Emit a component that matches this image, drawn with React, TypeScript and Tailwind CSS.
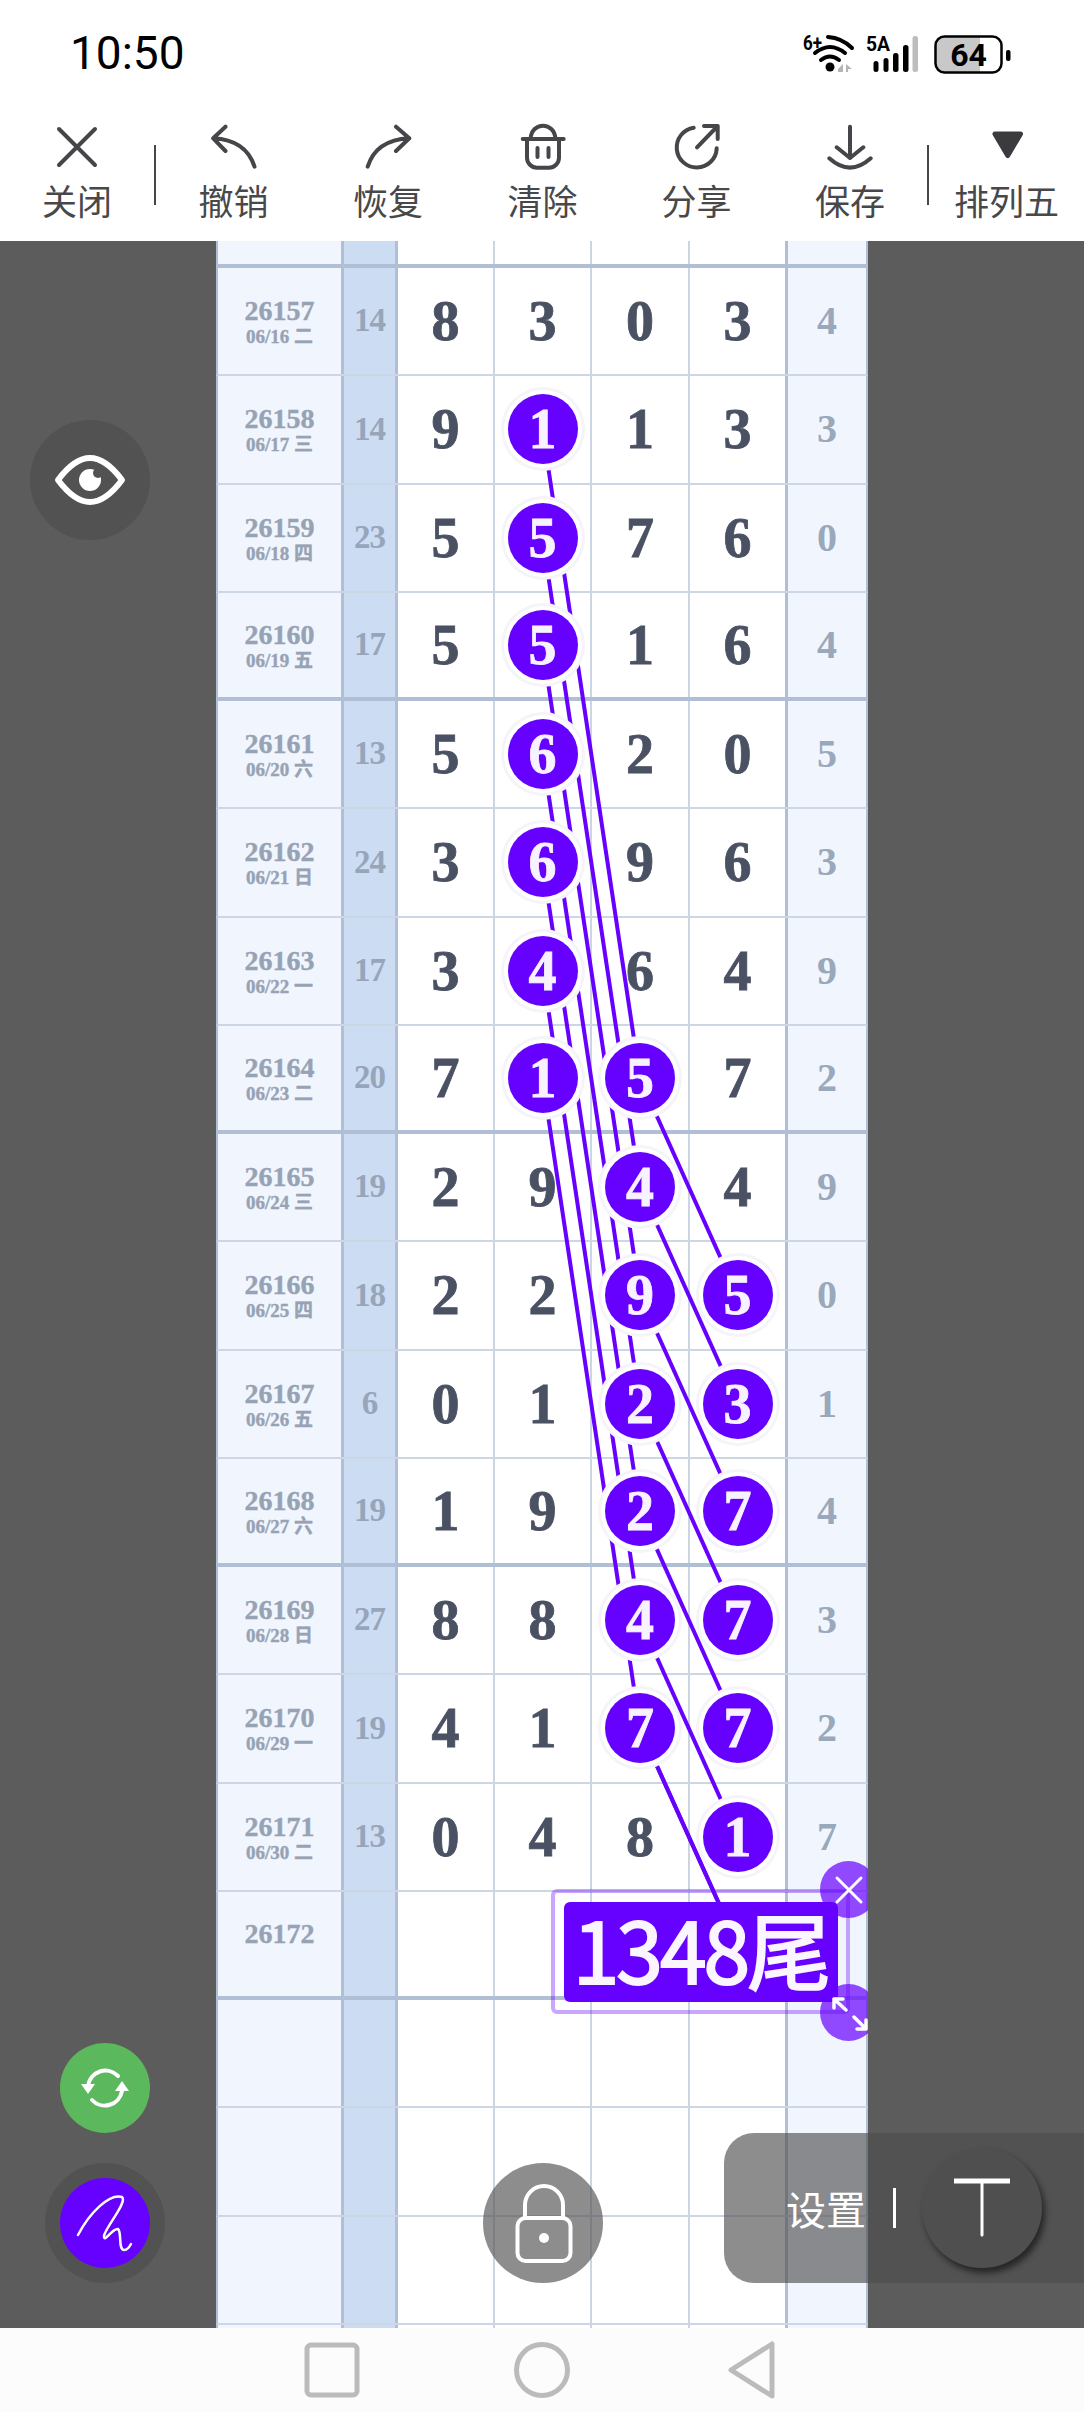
import React from 'react';

type Row = {
  no: string;
  date: string;
  sum: string;
  nums: string[];
  hits: number[];
  last: string;
};

const rows: Row[] = [
  { no: '26157', date: '06/16 二', sum: '14', nums: ['8', '3', '0', '3'], hits: [], last: '4' },
  { no: '26158', date: '06/17 三', sum: '14', nums: ['9', '1', '1', '3'], hits: [1], last: '3' },
  { no: '26159', date: '06/18 四', sum: '23', nums: ['5', '5', '7', '6'], hits: [1], last: '0' },
  { no: '26160', date: '06/19 五', sum: '17', nums: ['5', '5', '1', '6'], hits: [1], last: '4' },
  { no: '26161', date: '06/20 六', sum: '13', nums: ['5', '6', '2', '0'], hits: [1], last: '5' },
  { no: '26162', date: '06/21 日', sum: '24', nums: ['3', '6', '9', '6'], hits: [1], last: '3' },
  { no: '26163', date: '06/22 一', sum: '17', nums: ['3', '4', '6', '4'], hits: [1], last: '9' },
  { no: '26164', date: '06/23 二', sum: '20', nums: ['7', '1', '5', '7'], hits: [1, 2], last: '2' },
  { no: '26165', date: '06/24 三', sum: '19', nums: ['2', '9', '4', '4'], hits: [2], last: '9' },
  { no: '26166', date: '06/25 四', sum: '18', nums: ['2', '2', '9', '5'], hits: [2, 3], last: '0' },
  { no: '26167', date: '06/26 五', sum: '6', nums: ['0', '1', '2', '3'], hits: [2, 3], last: '1' },
  { no: '26168', date: '06/27 六', sum: '19', nums: ['1', '9', '2', '7'], hits: [2, 3], last: '4' },
  { no: '26169', date: '06/28 日', sum: '27', nums: ['8', '8', '4', '7'], hits: [2, 3], last: '3' },
  { no: '26170', date: '06/29 一', sum: '19', nums: ['4', '1', '7', '7'], hits: [2, 3], last: '2' },
  { no: '26171', date: '06/30 二', sum: '13', nums: ['0', '4', '8', '1'], hits: [3], last: '7' },
  { no: '26172', date: '\u00a0', sum: '', nums: ['', '', '', ''], hits: [], last: '' },
];

// [row, col, row, col] of every drawn link
const links = [
  [1, 1, 7, 2],
  [2, 1, 8, 2],
  [3, 1, 9, 2],
  [4, 1, 10, 2],
  [5, 1, 11, 2],
  [6, 1, 12, 2],
  [7, 1, 13, 2],
  [7, 2, 9, 3],
  [8, 2, 10, 3],
  [9, 2, 11, 3],
  [10, 2, 12, 3],
  [11, 2, 13, 3],
  [12, 2, 14, 3],
  [13, 2, 15, 3],
];

const colX = [229.5, 326.5, 424, 521.5];
const rowY = (i: number) => 27 + 108.25 * i + 53;

const gridCols = 'grid h-full grid-cols-[123px_57px_97px_97px_98px_98px_78px]';
const serif = { fontFamily: '"Liberation Serif", "Noto Sans CJK SC", serif' };

const ToolIcon = ({ children }: { children: React.ReactNode }) => (
  <svg width="48" height="48" viewBox="0 0 48 48" fill="none" stroke="#46464a" strokeWidth="4" strokeLinecap="round" strokeLinejoin="round">
    {children}
  </svg>
);

const ToolItem = ({ label, width, children }: { label: string; width: string; children: React.ReactNode }) => (
  <div className={`flex flex-col items-center ${width}`}>
    <ToolIcon>{children}</ToolIcon>
    <span className="mt-[10px] text-[35px] leading-[40px] text-[#48484a] whitespace-nowrap">{label}</span>
  </div>
);

const TableRow = ({ row, thick }: { row: Row; thick: boolean }) => (
  <div className={`h-[108.25px] border-x-2 border-x-[#b0bfd6] ${thick ? 'border-b-4 border-b-[#b0bfd6]' : 'border-b-2 border-b-[#ccd6e4]'}`}>
    <div className={gridCols} style={serif}>
      <div className="flex flex-col items-center justify-center bg-[#f1f6fe] pt-1 font-bold text-[#97a3b5] [-webkit-text-stroke:0.4px]">
        <span className="text-[28px] leading-[28px]">{row.no}</span>
        <span className="text-[19px] leading-[24px]">{row.date}</span>
      </div>
      <div className="flex items-center justify-center border-x-[3px] border-x-[#b0bfd6] bg-[#ccdcf3] text-[33px] font-bold tracking-[-1px] text-[#97a5ba]">
        {row.sum}
      </div>
      {row.nums.map((n, c) => (
        <div key={c} className={`flex items-center justify-center text-[56px] font-bold text-[#4a5163] [-webkit-text-stroke:0.8px] ${c === 3 ? 'border-r-[3px] border-r-[#b0bfd6]' : 'border-r-2 border-r-[#ccd5e3]'}`}>
          {row.hits.includes(c) ? (
            <div className="relative z-20 flex size-[70px] items-center justify-center rounded-full bg-[#6600ff] text-[#f8f2ff] shadow-[0_0_0_4px_#ffffff,0_0_0_7px_#f6f3f9]">
              {n}
            </div>
          ) : (
            n
          )}
        </div>
      ))}
      <div className="flex items-center justify-center bg-[#f1f6fe] text-[40px] font-bold text-[#9aa8bc]">{row.last}</div>
    </div>
  </div>
);

const EmptyRow = ({ height, thick }: { height: string; thick: boolean }) => (
  <div className={`${height} border-x-2 border-x-[#b0bfd6] ${thick ? 'border-b-4 border-b-[#b0bfd6]' : 'border-b-2 border-b-[#ccd6e4]'}`}>
    <div className={gridCols}>
      <div className="bg-[#f1f6fe]" />
      <div className="border-x-[3px] border-x-[#b0bfd6] bg-[#ccdcf3]" />
      <div className="border-r-2 border-r-[#ccd5e3]" />
      <div className="border-r-2 border-r-[#ccd5e3]" />
      <div className="border-r-2 border-r-[#ccd5e3]" />
      <div className="border-r-[3px] border-r-[#b0bfd6]" />
      <div className="bg-[#f1f6fe]" />
    </div>
  </div>
);

export default function App() {
  return (
    <div className="relative flex h-[2412px] w-[1084px] flex-col overflow-hidden bg-white" style={{ fontFamily: '"Noto Sans CJK SC", "Noto Sans", sans-serif' }}>
      {/* Status bar + toolbar */}
      <div className="h-[241px] shrink-0 bg-white">
        <div className="flex h-[122px] items-start justify-between">
          <span className="ml-[70px] mt-[21px] text-[46px] leading-[64px] text-black" style={{ fontFamily: 'Roboto, sans-serif' }}>
            10:50
          </span>
          <svg className="mr-[44px] mt-[20px]" width="260" height="70" viewBox="0 0 260 70" fill="none">
            <text x="23" y="30" fontFamily="Roboto, sans-serif" fontWeight="700" fontSize="21" fill="#000" textLength="19" lengthAdjust="spacingAndGlyphs">6+</text>
            <path d="M48 17 Q62 18 72 28" stroke="#000" strokeWidth="4" strokeLinecap="round" />
            <path d="M35 33 Q50 21 65 33" stroke="#000" strokeWidth="4" strokeLinecap="round" />
            <path d="M41 40 Q50 33 59 40" stroke="#000" strokeWidth="4" strokeLinecap="round" />
            <circle cx="50" cy="47" r="4.5" fill="#000" />
            <path d="M58 49 L63 44 V52 H58 Z M66 44 L72 49 H68 V52 H66 Z" fill="#b5b5b5" />
            <text x="86" y="31" fontFamily="Roboto, sans-serif" fontWeight="700" fontSize="21" fill="#000" textLength="24" lengthAdjust="spacingAndGlyphs">5A</text>
            <rect x="93.5" y="41" width="5" height="11" rx="2.5" fill="#000" />
            <rect x="103.5" y="38" width="5" height="14" rx="2.5" fill="#000" />
            <rect x="113" y="33" width="5.5" height="19" rx="2.5" fill="#000" />
            <rect x="123" y="25" width="5.5" height="27" rx="2.5" fill="#000" />
            <rect x="132.5" y="16" width="5.5" height="36" rx="2.5" fill="#bdbdbd" />
            <path d="M164 17 H200 V52 H164 Q156 52 156 44 V25 Q156 17 164 17 Z" fill="#c8c8c8" />
            <rect x="155.5" y="16.5" width="66" height="36" rx="9" stroke="#000" strokeWidth="2.5" />
            <text x="188.5" y="46" textAnchor="middle" fontFamily="Roboto, sans-serif" fontWeight="700" fontSize="32" fill="#000">64</text>
            <rect x="226" y="30" width="4.5" height="11" rx="2" fill="#000" />
          </svg>
        </div>
        <div className="flex items-start">
          <ToolItem label="关闭" width="w-[154px]">
            <path d="M6 7 L42 43 M42 7 L6 43" />
          </ToolItem>
          <div className="mt-[23px] h-[60px] w-[2px] bg-[#46464a]" />
          <ToolItem label="撤销" width="w-[155px]">
            <path d="M15.5 4.7 L3.2 16.3 L15.5 29 M3.2 16.3 Q36 18 44.5 44.7" />
          </ToolItem>
          <ToolItem label="恢复" width="w-[154px]">
            <path d="M32 4.7 L45.3 16.3 L32 29 M45.3 16.3 Q12 18 3.7 44.7" />
          </ToolItem>
          <ToolItem label="清除" width="w-[155px]">
            <path d="M3.7 17 H44.7 M11.5 17 C12 8 18 3.7 24 3.7 C30 3.7 36 8 36.5 17 M8 17 V35.7 a10 10 0 0 0 10 10 h12 a10 10 0 0 0 10 -10 V17 M18.5 26 v9 M29.5 26 v9" />
          </ToolItem>
          <ToolItem label="分享" width="w-[153px]">
            <path d="M20.7 5.7 A20 20 0 1 0 43.7 26.3 M24 25.3 L44.7 4 M31 4 H44.7 V17" />
          </ToolItem>
          <ToolItem label="保存" width="w-[154px]">
            <path d="M24 4.7 V36 M10.7 25.3 L24 36 L37.3 25.3 M3.3 36.3 Q24 55 44.7 36.3" />
          </ToolItem>
          <div className="mt-[23px] h-[60px] w-[2px] bg-[#46464a]" />
          <ToolItem label="排列五" width="w-[155px]">
            <path d="M12 12 H37.5 L24.7 33.5 Z" fill="#3a3a3f" stroke="#3a3a3f" strokeWidth="5" />
          </ToolItem>
        </div>
      </div>

      {/* Chart area */}
      <div className="relative min-h-0 flex-1 bg-[#5c5c5c]">
        <div className="relative mx-auto h-full w-[652px] overflow-hidden bg-white">
          <EmptyRow height="h-[27px]" thick />
          {rows.map((row, i) => (
            <TableRow key={row.no} row={row} thick={i % 4 === 3} />
          ))}
          <EmptyRow height="h-[108.25px]" thick={false} />
          <EmptyRow height="h-[108.25px]" thick={false} />
          <EmptyRow height="h-[108.25px]" thick={false} />
          <EmptyRow height="h-[10px]" thick={false} />

          <svg className="absolute left-0 top-0 z-10" width="652" height="2087" viewBox="0 0 652 2087" fill="none">
            {links.map(([r1, c1, r2, c2]) => (
              <line key={`${r1}-${c1}`} x1={colX[c1]} y1={rowY(r1)} x2={colX[c2]} y2={rowY(r2)} stroke="#6600ff" strokeWidth="4" />
            ))}
            <line x1={colX[2]} y1={rowY(13)} x2={colX[3]} y2={rowY(15)} stroke="#6600ff" strokeWidth="4" />
          </svg>

          {/* Text tag with its handles */}
          <div className="absolute left-[335px] top-[1648px] z-30 flex h-[125px] w-[299px] items-center justify-center rounded-[6px] border-4 border-[#6600ff59]">
            <div className="flex h-[100px] w-[274px] shrink-0 items-center justify-center rounded-[6px] bg-[#6600ff] pb-[8px] text-[84px] leading-none tracking-[-3px] text-[#fbf5ff] [-webkit-text-stroke:2px]">
              1348尾
            </div>
          </div>
          <div className="absolute left-[604px] top-[1620px] z-40 flex size-[57px] items-center justify-center rounded-full bg-[#6600ffb3]">
            <svg width="30" height="30" viewBox="0 0 30 30" stroke="#fff" strokeWidth="3" strokeLinecap="round">
              <path d="M3 3 L27 27 M27 3 L3 27" />
            </svg>
          </div>
          <div className="absolute left-[604px] top-[1743px] z-40 flex size-[57px] items-center justify-center rounded-full bg-[#6600ffb3]">
            <svg width="40" height="40" viewBox="0 0 40 40" fill="none" stroke="#fff" strokeWidth="3.5" strokeLinecap="round" strokeLinejoin="round">
              <path d="M5 6 L17 17 M5 15 V6 H14 M37 36 L25 24 M37 27 V36 H28" />
            </svg>
          </div>
        </div>

        {/* Floating buttons */}
        <div className="absolute left-[30px] top-[179px] flex size-[120px] items-center justify-center rounded-full bg-[#4c4c4ca3]">
          <svg width="80" height="80" viewBox="0 0 80 80" fill="none">
            <path d="M8 40 C20 24 30 18 40 18 C50 18 60 24 72 40 C60 56 50 62 40 62 C30 62 20 56 8 40 Z" stroke="#fff" strokeWidth="6" strokeLinejoin="round" />
            <circle cx="40" cy="40" r="11" fill="#fff" />
            <circle cx="48" cy="33" r="5" fill="#525252" />
          </svg>
        </div>
        <div className="absolute left-[60px] top-[1802px] flex size-[90px] items-center justify-center rounded-full bg-[#5cb85c]">
          <svg width="90" height="90" viewBox="0 0 90 90" fill="none">
            <path d="M28 43 A17.5 17.5 0 0 1 58 33 M62 48 A17.5 17.5 0 0 1 32 57" stroke="#fff" strokeWidth="4" strokeLinecap="round" />
            <path d="M21 41 H35 L28 51 Z M55 48 H69 L62 38 Z" fill="#fff" />
          </svg>
        </div>
        <div className="absolute left-[45px] top-[1922px] flex size-[120px] items-center justify-center rounded-full bg-[#4c4c4ca3]">
          <div className="flex size-[90px] items-center justify-center rounded-full bg-[#6600ff]">
            <svg width="90" height="90" viewBox="0 0 90 90" fill="none">
              <path d="M18 57 C30 34 50 15 62 19 C68 24 45 50 44 58 C44 66 52 50 58 51 C62 54 58 72 64 72 C67 72 70 68 71 66" stroke="#fff" strokeWidth="2.5" strokeLinecap="round" />
            </svg>
          </div>
        </div>
        <div className="absolute left-[483px] top-[1922px] flex size-[120px] items-center justify-center rounded-full bg-[#4c4c4ca3]">
          <svg width="80" height="80" viewBox="0 0 80 80" fill="none" stroke="#fff" strokeWidth="4">
            <path d="M22 35 V22 a19 19 0 0 1 38 0 V35" />
            <rect x="14.5" y="35" width="53" height="43" rx="8" />
            <circle cx="41" cy="55" r="5" fill="#fff" stroke="none" />
          </svg>
        </div>
        <div className="absolute left-[724px] right-0 top-[1892px] z-30 flex h-[150px] items-center rounded-l-[30px] bg-[#4c4c4ca3] pl-[62px]">
          <span className="text-[40px] leading-none text-white">设置</span>
          <div className="ml-[27px] h-[40px] w-[3px] bg-white" />
          <div className="ml-[26px] flex size-[120px] items-center justify-center rounded-full bg-[#4f4f4f] shadow-[3px_5px_6px_rgba(0,0,0,0.55)]">
            <svg width="64" height="64" viewBox="0 0 64 64" fill="none" stroke="#fff" strokeLinecap="round">
              <path d="M4 5 H60" strokeWidth="5" strokeLinecap="butt" />
              <path d="M32 5 V59" strokeWidth="3" />
            </svg>
          </div>
        </div>
      </div>

      {/* Navigation bar */}
      <div className="flex h-[84px] shrink-0 items-center justify-center gap-[150px] bg-[#fcfcfc]">
        <svg width="60" height="60" viewBox="0 0 60 60" fill="none" stroke="#bbbbbb" strokeWidth="5">
          <rect x="5" y="5" width="50" height="50" rx="4" />
        </svg>
        <svg width="60" height="60" viewBox="0 0 60 60" fill="none" stroke="#bbbbbb" strokeWidth="5">
          <circle cx="30" cy="30" r="25.5" />
        </svg>
        <svg width="60" height="60" viewBox="0 0 60 60" fill="none" stroke="#bbbbbb" strokeWidth="5" strokeLinejoin="round">
          <path d="M9 30 L50 4 V56 Z" />
        </svg>
      </div>
    </div>
  );
}
